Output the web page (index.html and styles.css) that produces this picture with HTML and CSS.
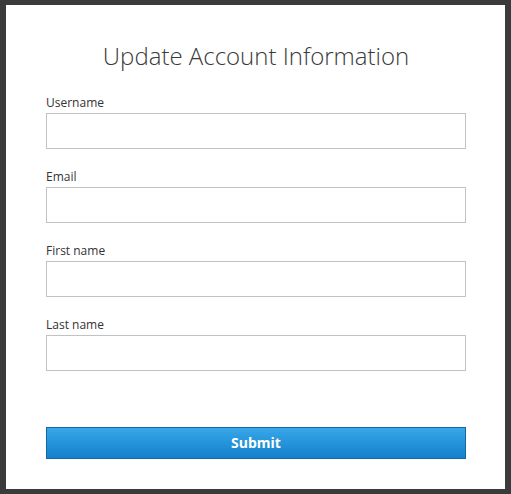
FILE: index.html
```html
<!DOCTYPE html>
<html lang="en">
<head>
<meta charset="utf-8">
<title>Update Account Information</title>
<link rel="stylesheet" href="styles.css">
</head>
<body>
<div class="card">
  <h1 class="title">Update Account Information</h1>
  <form class="form">
    <div class="field">
      <label class="label" for="username">Username</label>
      <input class="input" id="username" type="text">
    </div>
    <div class="field">
      <label class="label" for="email">Email</label>
      <input class="input" id="email" type="text">
    </div>
    <div class="field">
      <label class="label" for="first">First name</label>
      <input class="input" id="first" type="text">
    </div>
    <div class="field">
      <label class="label" for="last">Last name</label>
      <input class="input" id="last" type="text">
    </div>
    <button class="submit" type="button">Submit</button>
  </form>
</div>
</body>
</html>
```

FILE: styles.css
```css
html, body {
  margin: 0;
  padding: 0;
}
body {
  background: #3b3b3b;
  padding: 5px 6px;
  height: 494px;
  box-sizing: border-box;
  font-family: "Open Sans", "Noto Sans", sans-serif;
}
.card {
  background: #ffffff;
  width: 499px;
  height: 484px;
  box-sizing: border-box;
  padding: 35px 39px 0 40px;
}
.title {
  margin: 0;
  font-size: 24px;
  font-weight: 300;
  line-height: 32px;
  color: #3a3a3a;
  text-align: center;
}
.form {
  display: flex;
  flex-direction: column;
  gap: 20px;
  margin-top: 23px;
}
.field {
  display: flex;
  flex-direction: column;
  gap: 2px;
}
.label {
  font-size: 12px;
  line-height: 16px;
  color: #333333;
}
.input {
  display: block;
  width: 100%;
  height: 36px;
  box-sizing: border-box;
  margin: 0;
  border: 1px solid #c2c2c2;
  background: #ffffff;
  outline: none;
}
.submit {
  margin-top: 36px;
  width: 100%;
  height: 32px;
  box-sizing: border-box;
  border: 1px solid #0f6aa6;
  background: linear-gradient(#38a6e8, #1381cc);
  color: #ffffff;
  font-family: "Open Sans", "Noto Sans", sans-serif;
  font-weight: 700;
  font-size: 14px;
  line-height: 30px;
  padding: 0;
  cursor: pointer;
}
```
